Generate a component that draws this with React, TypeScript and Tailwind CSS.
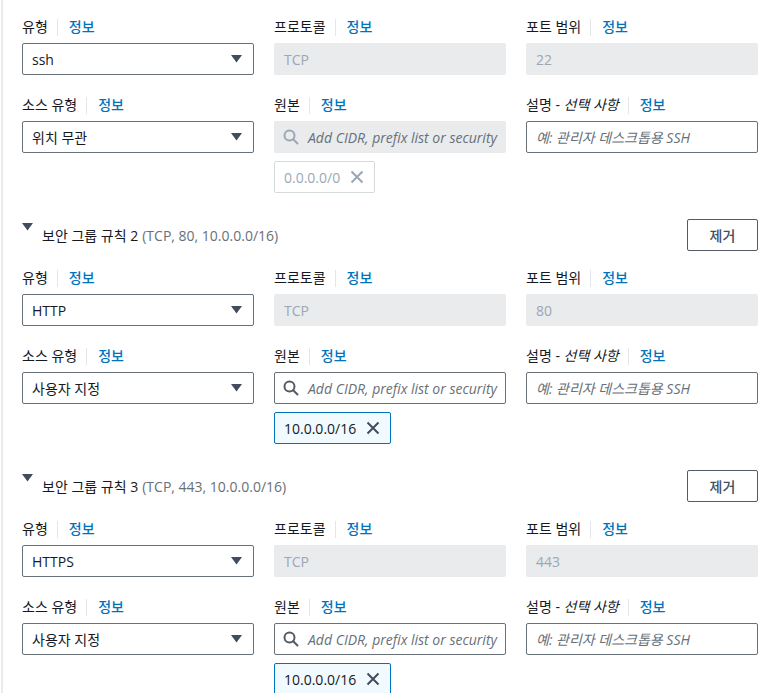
import React from "react";

type Rule = {
  index: number;
  type: string;
  port: string;
  sourceType: string;
  cidr: string;
  locked: boolean;
  summary?: string;
};

const rules: Rule[] = [
  { index: 1, type: "ssh", port: "22", sourceType: "위치 무관", cidr: "0.0.0.0/0", locked: true },
  {
    index: 2,
    type: "HTTP",
    port: "80",
    sourceType: "사용자 지정",
    cidr: "10.0.0.0/16",
    locked: false,
    summary: "(TCP, 80, 10.0.0.0/16)",
  },
  {
    index: 3,
    type: "HTTPS",
    port: "443",
    sourceType: "사용자 지정",
    cidr: "10.0.0.0/16",
    locked: false,
    summary: "(TCP, 443, 10.0.0.0/16)",
  },
];

const Caret = () => (
  <svg width="11" height="8" viewBox="0 0 11 8">
    <polygon points="0,0 11,0 5.5,7.5" fill="#414d5c" />
  </svg>
);

const SearchIcon = ({ color }: { color: string }) => (
  <svg width="16" height="16" viewBox="0 0 16 16" fill="none">
    <circle cx="6.5" cy="6.5" r="5" stroke={color} strokeWidth="2" />
    <line x1="10.2" y1="10.2" x2="14.5" y2="14.5" stroke={color} strokeWidth="2" strokeLinecap="round" />
  </svg>
);

const CloseIcon = ({ color }: { color: string }) => (
  <svg width="14" height="14" viewBox="0 0 14 14" fill="none">
    <path d="M1.5 1.5 L12.5 12.5 M12.5 1.5 L1.5 12.5" stroke={color} strokeWidth="2" />
  </svg>
);

const Label = ({ children }: { children: React.ReactNode }) => (
  <div className="flex h-5 items-center text-[14px] leading-5 text-[#16191f]">
    <span>{children}</span>
    <span className="ml-[9px] mr-[11px] h-[17px] w-px bg-[#e4e7ea]" />
    <span className="font-medium text-[#0073bb]">정보</span>
  </div>
);

const Select = ({ value }: { value: string }) => (
  <div className="mt-[6px] flex h-8 items-center justify-between rounded-[2px] border border-[#687078] bg-white pl-[9px] pr-[11px] text-[14px] text-[#16191f]">
    <span>{value}</span>
    <Caret />
  </div>
);

const Disabled = ({ value }: { value: string }) => (
  <div className="mt-[6px] flex h-8 items-center rounded-[2px] bg-[#e9ebed] px-[10px] text-[14px] text-[#9ba7b6]">
    {value}
  </div>
);

const SearchInput = ({ locked }: { locked: boolean }) => (
  <div
    className={
      locked
        ? "mt-[6px] flex h-8 items-center gap-[9px] overflow-hidden rounded-[2px] border border-[#e9ebed] bg-[#e9ebed] pl-[8px]"
        : "mt-[6px] flex h-8 items-center gap-[9px] overflow-hidden rounded-[2px] border border-[#687078] bg-white pl-[8px]"
    }
  >
    <span className="shrink-0">
      <SearchIcon color={locked ? "#9ba7b6" : "#545b64"} />
    </span>
    <span className="whitespace-nowrap text-[14px] italic text-[#687078]">Add CIDR, prefix list or security</span>
  </div>
);

const Chip = ({ value, locked }: { value: string; locked: boolean }) => (
  <div
    className={
      locked
        ? "mt-2 flex h-8 w-fit items-center gap-[10px] rounded-[2px] border border-[#d5dbdb] bg-white pl-[9px] pr-[10px] text-[14px] text-[#9ba7b6]"
        : "mt-2 flex h-8 w-fit items-center gap-[10px] rounded-[2px] border border-[#0073bb] bg-[#f1faff] pl-[9px] pr-[10px] text-[14px] text-[#16191f]"
    }
  >
    <span>{value}</span>
    <CloseIcon color={locked ? "#9ba7b6" : "#414d5c"} />
  </div>
);

const RuleFields = ({ rule }: { rule: Rule }) => (
  <div className="grid grid-cols-[232px_232px_232px] gap-x-5">
    <div>
      <Label>유형</Label>
      <Select value={rule.type} />
    </div>
    <div>
      <Label>프로토콜</Label>
      <Disabled value="TCP" />
    </div>
    <div>
      <Label>포트 범위</Label>
      <Disabled value={rule.port} />
    </div>

    <div className="mt-5">
      <Label>소스 유형</Label>
      <Select value={rule.sourceType} />
    </div>
    <div className="mt-5">
      <Label>원본</Label>
      <SearchInput locked={rule.locked} />
      <Chip value={rule.cidr} locked={rule.locked} />
    </div>
    <div className="mt-5">
      <Label>
        설명 - <span className="italic">선택 사항</span>
      </Label>
      <div className="mt-[6px] flex h-8 items-center overflow-hidden rounded-[2px] border border-[#687078] bg-white px-[9px]">
        <span className="whitespace-nowrap text-[14px] italic text-[#687078]">예: 관리자 데스크톱용 SSH</span>
      </div>
    </div>
  </div>
);

const RuleHeader = ({ rule }: { rule: Rule }) => (
  <div className="mb-[17px] mt-[26px] flex h-8 w-[736px] items-center justify-between">
    <div className="flex items-center text-[14px]">
      <span className="mb-[16px] mr-[9px]">
        <Caret />
      </span>
      <span className="text-[#16191f]">보안 그룹 규칙 {rule.index}</span>
      <span className="ml-[4px] text-[#687078]">{rule.summary}</span>
    </div>
    <button className="h-8 w-[71px] rounded-[2px] border border-[#545b64] bg-white text-[14px] font-medium text-[#414d5c]">
      제거
    </button>
  </div>
);

export default function App() {
  return (
    <div
      className="h-[693px] w-[775px] overflow-hidden bg-white"
      style={{ fontFamily: '"Open Sans", "Noto Sans CJK KR", sans-serif' }}
    >
      <div className="ml-[1px] h-full border-l-2 border-[#e9ebed] pl-[19px] pr-[17px] pt-[17px]">
        {rules.map((rule) => (
          <div key={rule.index}>
            {rule.index > 1 && <RuleHeader rule={rule} />}
            <RuleFields rule={rule} />
          </div>
        ))}
      </div>
    </div>
  );
}
